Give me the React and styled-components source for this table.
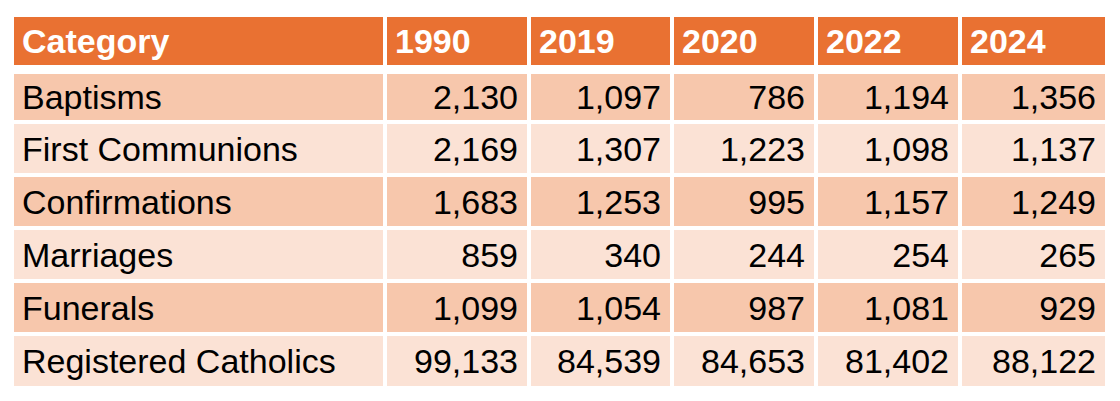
import React from "react";
import styled, { createGlobalStyle } from "styled-components";

const GlobalStyle = createGlobalStyle`
    html, body {
        margin: 0;
        padding: 0;
        background: #fff;
    }
`;

const columns = ["Category", "1990", "2019", "2020", "2022", "2024"];

const rows = [
    ["Baptisms", "2,130", "1,097", "786", "1,194", "1,356"],
    ["First Communions", "2,169", "1,307", "1,223", "1,098", "1,137"],
    ["Confirmations", "1,683", "1,253", "995", "1,157", "1,249"],
    ["Marriages", "859", "340", "244", "254", "265"],
    ["Funerals", "1,099", "1,054", "987", "1,081", "929"],
    ["Registered Catholics", "99,133", "84,539", "84,653", "81,402", "88,122"]
];

const Page = styled.div`
    padding: 17px 0 0 14px;
    font-family: "Liberation Sans", Arial, sans-serif;
`;

const Grid = styled.div`
    display: grid;
    grid-template-columns: 369px 140px 139px 140px 140px 143px;
    grid-template-rows: 53px 46px repeat(4, 49px) 50px;
    column-gap: 4px;
    row-gap: 4px;
    width: max-content;
`;

const HeadCell = styled.div`
    display: flex;
    align-items: center;
    padding: 0 8px;
    margin-bottom: 5px;
    background: #e97132;
    color: #fff;
    font-weight: bold;
    font-size: 34px;
    line-height: 1;
`;

const Cell = styled.div`
    display: flex;
    align-items: center;
    justify-content: ${props => (props.numeric ? "flex-end" : "flex-start")};
    padding: 0 ${props => (props.numeric ? "9px" : "8px")} 0 8px;
    background: ${props => (props.shade ? "#f7c7ac" : "#fbe2d5")};
    color: #000;
    font-size: 34px;
    line-height: 1;
    white-space: nowrap;
`;

export default function App() {
    return (
        <Page>
            <GlobalStyle />
            <Grid>
                {columns.map(col => (
                    <HeadCell key={col}>{col}</HeadCell>
                ))}
                {rows.map((row, r) =>
                    row.map((value, c) => (
                        <Cell key={`${r}-${c}`} numeric={c > 0} shade={r % 2 === 0}>
                            {value}
                        </Cell>
                    ))
                )}
            </Grid>
        </Page>
    );
}
